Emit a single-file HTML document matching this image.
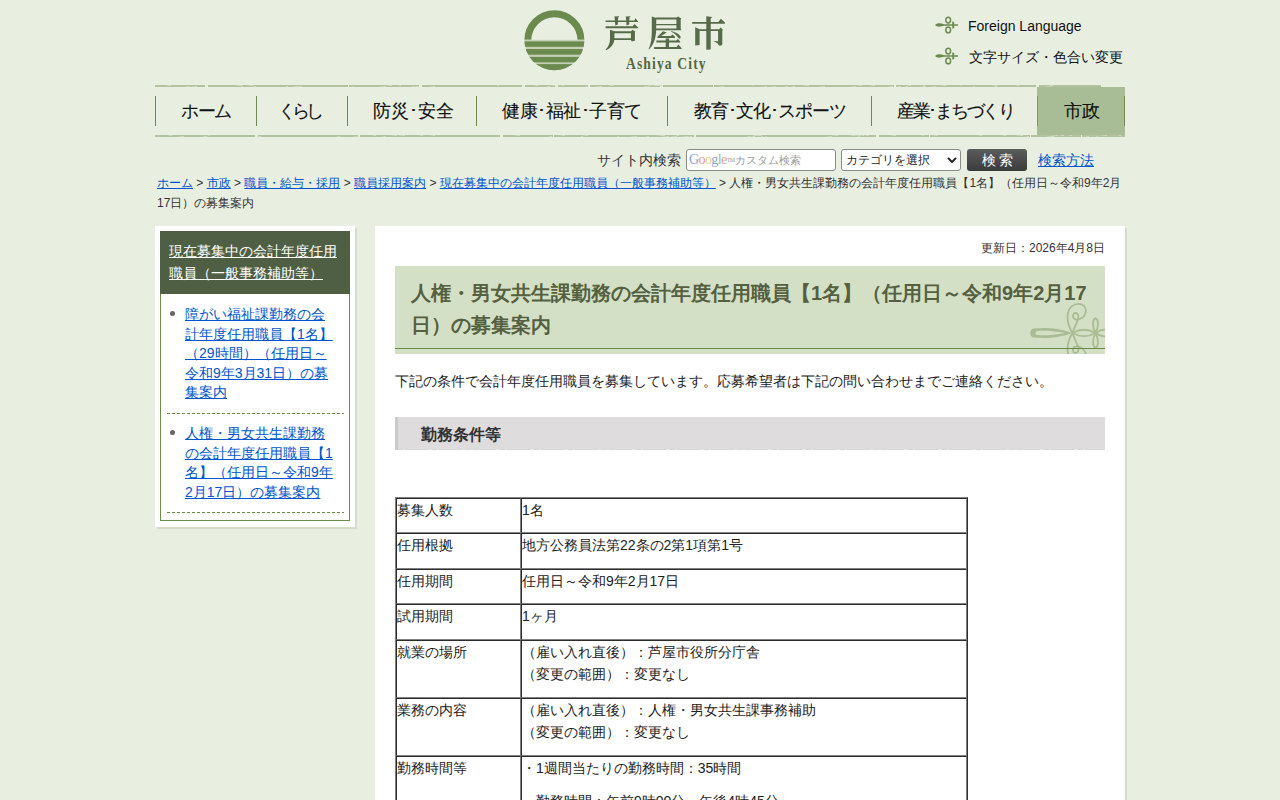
<!DOCTYPE html>
<html lang="ja"><head><meta charset="utf-8"><title>芦屋市</title>
<style>
html,body{margin:0;padding:0}
body{background:#e8efe1;font-family:"Liberation Sans",sans-serif;color:#222;width:1280px;height:800px;overflow:hidden;position:relative}
.abs{position:absolute}
a{color:#0055cc}
#hdr{position:absolute;left:0;top:0;width:1280px;height:140px}
.logo-t{position:absolute;left:606px;top:8px;font-size:34px;letter-spacing:9.2px;color:#566b4a;font-weight:bold;line-height:50px;white-space:nowrap}
.logo-e{position:absolute;left:626px;top:54px;font-family:"Liberation Serif",serif;font-weight:bold;font-size:17px;letter-spacing:1.4px;color:#52663f;line-height:20px;white-space:nowrap;transform:scaleX(0.8);transform-origin:0 0}
.hl{position:absolute;left:968px;font-size:14px;color:#111;line-height:20px;white-space:nowrap}
.nav-line{position:absolute;left:155px;width:970px;height:2px;background:repeating-linear-gradient(90deg,#b6c5a3 0 37px,#cdd8bf 37px 41px,#b6c5a3 41px 83px,#e8efe1 83px 86px)}
.sep{position:absolute;top:96px;width:1px;height:30px;background:#6f8a55}
.nv{position:absolute;top:99px;font-size:18px;line-height:24px;color:#111;white-space:nowrap;-webkit-text-stroke:0.12px #111}
#srch{position:absolute;top:148px;left:0;width:1280px;height:24px}
.crumb{position:absolute;left:157px;top:173px;width:970px;font-size:12px;line-height:20px;color:#333}
#side{position:absolute;left:155px;top:226px;width:200px;height:301px;background:#fff;box-shadow:2px 2px 0 #d5dccd}
#side .box{position:absolute;left:5px;top:5px;width:188px;height:288px;border:1px solid #6a8a4a}
#side .hd{position:absolute;left:-1px;top:-1px;width:190px;height:63px;background:#4f5f43}
#side .hd a{position:absolute;left:9px;top:9px;width:175px;color:#fff;font-size:14px;line-height:22px}
#side .it{position:absolute;left:24px;width:160px;font-size:14px;line-height:19.6px}
#side .bul{position:absolute;left:9px;width:5px;height:5px;border-radius:50%;background:#666}
#side .dash{position:absolute;left:6px;width:177px;height:1px;background:repeating-linear-gradient(90deg,#6a8a4a 0 3px,transparent 3px 5px)}
#main{position:absolute;left:375px;top:226px;width:750px;height:600px;background:#fff;box-shadow:2px 2px 0 #d5dccd}
.upd{position:absolute;right:20px;top:12px;font-size:12px;line-height:20px;color:#333}
.ttl{position:absolute;left:20px;top:40px;width:710px;height:88px;background:#d4e0c6;overflow:hidden}
.ttl .ln{position:absolute;left:0;top:82px;width:710px;height:1px;background:#6a8a4a}
.ttl h1{position:absolute;left:16px;top:11px;width:690px;margin:0;font-size:20px;line-height:32px;color:#556040;font-weight:bold}
.lead{position:absolute;left:20px;top:145px;font-size:14px;line-height:20px;color:#222;white-space:nowrap}
.h2{position:absolute;left:20px;top:191px;width:710px;height:33px;background:#dfdcdd}
.h2 .lb{position:absolute;left:0;top:0;width:3px;height:33px;background:#cbc9cb}
.h2 .bl{position:absolute;left:3px;top:32px;width:707px;height:1px;background:repeating-linear-gradient(90deg,#d6d4d5 0 5px,#e6e4e5 5px 7px,#d8d6d7 7px 30px,#e8e6e7 30px 34px)}
.h2 div.t{position:absolute;left:26px;top:7px;font-size:16px;line-height:22px;font-weight:bold;color:#333}
table.dt{position:absolute;left:20px;top:271px;border:1px outset gray;border-spacing:0;width:573px;font-size:14px;color:#222}
table.dt td{border:1px inset gray;padding:0;vertical-align:top;line-height:22.6px}
table.dt p{margin:0 0 10.8px}
</style></head><body>
<div id="hdr">
  <svg class="abs" style="left:520px;top:6px" width="70" height="70" viewBox="0 0 70 70">
    <defs><clipPath id="cc"><circle cx="34.4" cy="34.2" r="30"/></clipPath><clipPath id="ct"><rect x="0" y="0" width="70" height="33.8"/></clipPath></defs>
    <circle cx="34.4" cy="34.2" r="26.5" fill="none" stroke="#6b8a4e" stroke-width="7" clip-path="url(#ct)"/>
    <g clip-path="url(#cc)">
      <rect x="0" y="33.8" width="70" height="40" fill="#c3d0b4"/>
      <g fill="#6b8a4e">
      <rect x="0" y="35.4" width="70" height="5.4"/>
      <rect x="0" y="43.05" width="70" height="5.65"/>
      <rect x="0" y="50.9" width="70" height="5.4"/>
      <rect x="0" y="58.1" width="70" height="12"/>
      </g>
    </g>
  </svg>
  <svg class="abs" style="left:600px;top:12px" width="130" height="42" viewBox="600 12 130 42">
<g fill="#566b4a">
<!-- 芦 -->
<path d="M605.6 20.4H634.2L635.6 18.2L638 21.4V22H605.6Z"/>
<path d="M614.2 16.5L619.4 16.2L618.1 17.8L617.9 24.6L615.3 25.4L614.6 17.6Z"/>
<path d="M625.5 16.5L630.7 16.2L629.4 17.8L629.2 24.6L626.6 25.4L625.9 17.6Z"/>
<path d="M605.6 26.3H632.6L634.4 24L638.2 27.4V28.3H605.6Z"/>
<path d="M610 29.8L614.5 31.2L614.3 39.5C614 44 611 48 606.3 50.2L605.6 49.6C608.8 46.5 610 43 610 38.5Z"/>
<path d="M613.3 31.3H631L632.5 29.8L635.3 31.6L634.9 32.8V40.8L631.8 41.6L630.9 39.9H613.3V38.2H630.9V33.3H613.3Z"/>
<!-- 屋 -->
<path d="M651.8 16.6L656.3 18.1L656.1 31.5C655.6 40 653 45.5 649 49.4L648.6 49C651 44.5 651.8 38.5 651.8 31Z"/>
<path d="M655.8 17.6H676.4L678.2 16.4L681.2 18.4L680.7 19.6V29.3L676.4 29.8V25.3H655.8V24H676.4V19.6H655.8Z"/>
<path d="M655.8 28.6H676.8L678.6 27.2L681.2 29.6V30.3H655.8Z"/>
<path d="M663 31.2L666.8 32.4L661 35.9H670.8L672.5 34.6L675 36.8V37.9H657.8L657.2 37.1Z"/>
<path d="M671.3 30.9C675 32 679 33.6 680.4 36.2C681 37.6 680.2 39 678.8 38.6C677.5 36 674.5 33.5 671 31.5Z"/>
<path d="M656.4 40.5H676.2L677.9 39.1L680.2 41.6V42.5H656.4Z"/>
<path d="M665.7 38.2L669.6 38.6L669 39.5V47.2H665.7Z"/>
<path d="M654.1 46.9H676.4L678.5 44.6L681.6 48.2V48.9H654.1Z"/>
<!-- 市 -->
<path d="M706.3 16.2L712.2 17L710.7 18.6V49.6L706.3 49.8Z"/>
<path d="M692.1 22H718.4L720.8 18.8L724.9 22.6V23.8H692.1Z"/>
<path d="M695.2 27.2L699.6 29.3V45L695.2 45.6Z"/>
<path d="M699.2 29.3H719.1L720.6 27.4L722.9 29.8L722.3 31V44C722.3 45.4 721 45.8 719 45.6L717.4 43.2L713.4 40.9L718.1 41.2V30.9H699.2Z"/>
</g>
</svg>
  <div class="logo-e">Ashiya City</div>
  <svg class="abs" style="left:934px;top:15px" width="26" height="20" viewBox="0 0 26 20">
    <g fill="none" stroke="#6b8a4e" stroke-width="1.5">
      <ellipse cx="14.2" cy="5.1" rx="2.4" ry="2.9"/>
      <ellipse cx="14.2" cy="14.9" rx="2.4" ry="2.9"/>
    </g>
    <path d="M1 10 C3 7.6 7 8.2 10 9.2 L24 9.2 L24 10.8 L10 10.8 C7 11.8 3 12.4 1 10Z" fill="#6b8a4e"/>
    <path d="M18.3 6.2L20.2 7V13L18.3 13.8Z" fill="#6b8a4e"/>
  </svg>
  <svg class="abs" style="left:934px;top:46px" width="26" height="20" viewBox="0 0 26 20">
    <g fill="none" stroke="#6b8a4e" stroke-width="1.5">
      <ellipse cx="14.2" cy="5.1" rx="2.4" ry="2.9"/>
      <ellipse cx="14.2" cy="14.9" rx="2.4" ry="2.9"/>
    </g>
    <path d="M1 10 C3 7.6 7 8.2 10 9.2 L24 9.2 L24 10.8 L10 10.8 C7 11.8 3 12.4 1 10Z" fill="#6b8a4e"/>
    <path d="M18.3 6.2L20.2 7V13L18.3 13.8Z" fill="#6b8a4e"/>
  </svg>
  <div class="hl" style="top:16px">Foreign Language</div>
  <div class="hl" style="top:47px;left:969px">文字サイズ・色合い変更</div>

  <svg class="abs" style="left:155px;top:85px" width="970" height="2" viewBox="0 0 970 2"><path d="M0 0h50v2h-50zM53 0h140v2h-140zM194 0h70v2h-70zM267 0h100v2h-100zM370 0h30v2h-30zM403 0h30v2h-30zM435 0h70v2h-70zM508 0h50v2h-50zM559 0h180v2h-180zM741 0h140v2h-140zM884 0h62v2h-62z" fill="#b3c29f"/><path d="M731 1h7v1h-1zM713 0h7v1h-1zM79 0h7v1h-1zM391 1h4v1h-1zM893 0h5v1h-1zM84 0h3v1h-1zM597 0h2v1h-1zM230 0h7v1h-1zM130 1h3v1h-1zM763 1h8v1h-1zM750 1h3v1h-1zM805 0h2v1h-1zM377 0h6v1h-1zM223 1h8v1h-1zM256 1h3v1h-1zM775 1h6v1h-1zM197 1h2v1h-1zM493 0h3v1h-1zM430 1h2v1h-1zM492 1h2v1h-1zM860 0h4v1h-1zM496 0h6v1h-1zM784 0h7v1h-1zM392 1h2v1h-1zM563 1h6v1h-1zM635 1h5v1h-1zM838 1h4v1h-1zM767 0h3v1h-1zM455 0h4v1h-1zM662 1h8v1h-1zM10 0h6v1h-1zM243 0h3v1h-1zM395 0h6v1h-1zM86 1h2v1h-1zM488 1h4v1h-1zM91 0h7v1h-1zM36 1h4v1h-1zM701 0h6v1h-1zM97 1h4v1h-1zM406 0h3v1h-1zM274 1h6v1h-1zM836 0h7v1h-1zM629 1h4v1h-1zM136 1h7v1h-1zM646 0h8v1h-1zM28 1h7v1h-1zM751 0h5v1h-1zM439 1h8v1h-1zM890 1h6v1h-1zM741 1h5v1h-1zM258 1h6v1h-1zM34 1h8v1h-1zM608 1h4v1h-1zM817 1h3v1h-1zM139 1h8v1h-1zM454 0h2v1h-1zM499 0h8v1h-1zM341 0h3v1h-1zM614 1h7v1h-1zM693 1h8v1h-1z" fill="#cfdac3"/></svg>
  
  <div class="abs" style="left:1037px;top:87px;width:88px;height:48px;background:#a8bd95"></div>
  <svg class="abs" style="left:155px;top:135px" width="970" height="2" viewBox="0 0 970 2"><path d="M0 0h100v2h-100zM103 0h100v2h-100zM205 0h140v2h-140zM348 0h50v2h-50zM399 0h140v2h-140zM541 0h180v2h-180zM724 0h50v2h-50zM775 0h100v2h-100zM876 0h50v2h-50zM927 0h43v2h-43z" fill="#b3c29f"/><path d="M847 0h4v1h-1zM505 0h5v1h-1zM426 0h7v1h-1zM198 1h6v1h-1zM235 0h7v1h-1zM474 1h8v1h-1zM392 1h5v1h-1zM226 1h5v1h-1zM823 0h4v1h-1zM694 0h6v1h-1zM462 1h2v1h-1zM891 1h8v1h-1zM520 0h4v1h-1zM101 1h5v1h-1zM913 0h4v1h-1zM243 0h7v1h-1zM22 1h7v1h-1zM515 1h7v1h-1zM506 1h8v1h-1zM501 0h7v1h-1zM698 0h8v1h-1zM12 0h5v1h-1zM671 1h6v1h-1zM597 0h4v1h-1zM709 0h5v1h-1zM706 0h3v1h-1zM594 1h6v1h-1zM703 1h2v1h-1zM862 0h3v1h-1zM777 0h6v1h-1zM591 1h4v1h-1zM48 1h2v1h-1zM890 1h8v1h-1zM895 0h8v1h-1zM599 0h8v1h-1zM425 1h3v1h-1zM735 0h6v1h-1zM610 1h2v1h-1zM532 1h5v1h-1zM217 0h4v1h-1zM263 0h5v1h-1zM963 0h3v1h-1zM860 0h8v1h-1zM490 1h4v1h-1zM52 0h3v1h-1zM904 0h5v1h-1zM767 0h2v1h-1zM48 1h4v1h-1zM358 0h7v1h-1zM870 1h4v1h-1zM181 1h4v1h-1zM275 0h5v1h-1zM525 1h8v1h-1zM606 1h2v1h-1zM404 0h6v1h-1zM941 1h2v1h-1zM676 0h7v1h-1zM197 1h7v1h-1zM945 0h7v1h-1zM930 1h4v1h-1z" fill="#cfdac3"/></svg>
  <div class="sep" style="left:155px"></div>
  <div class="sep" style="left:256px"></div>
  <div class="sep" style="left:347px"></div>
  <div class="sep" style="left:476px"></div>
  <div class="sep" style="left:667px"></div>
  <div class="sep" style="left:871px"></div>
  <div class="sep" style="left:1124px"></div>
  <div class="sep" style="left:1037px;background:#7d9866"></div>
  <div class="nv" style="left:181px;letter-spacing:-1.5px">ホーム</div>
  <div class="nv" style="left:278px;letter-spacing:-4px">くらし</div>
  <div class="nv" style="left:373px">防災･安全</div>
  <div class="nv" style="left:502px;letter-spacing:-0.45px">健康･福祉･子育て</div>
  <div class="nv" style="left:694px;letter-spacing:-1px">教育･文化･スポーツ</div>
  <div class="nv" style="left:897px;letter-spacing:-2.3px">産業･まちづくり</div>
  <div class="nv" style="left:1064px">市政</div>
</div>

<div id="srch">
  <div class="abs" style="left:597px;top:2px;font-size:14px;line-height:20px;color:#333">サイト内検索</div>
  <div class="abs" style="left:686px;top:1px;width:148px;height:20px;border:1px solid #8a8a8a;border-radius:3px;background:#fff">
    <div class="abs" style="left:2px;top:2px;font-family:'Liberation Serif',serif;font-size:14px;line-height:16px;letter-spacing:-0.6px;white-space:nowrap"><span style="color:#8aa2d8">G</span><span style="color:#e09a9a">o</span><span style="color:#e6cf7a">o</span><span style="color:#8aa2d8">g</span><span style="color:#92c48f">l</span><span style="color:#e09a9a">e</span><span style="font-size:6px;color:#999;vertical-align:top">TM</span></div>
    <div class="abs" style="left:48px;top:3px;font-size:11px;line-height:14px;color:#999;white-space:nowrap">カスタム検索</div>
  </div>
  <div class="abs" style="left:841px;top:1px;width:118px;height:20px;border:1px solid #8a8a8a;border-radius:3px;background:#fff">
    <div class="abs" style="left:4px;top:3px;font-size:12px;line-height:14px;color:#222;white-space:nowrap">カテゴリを選択</div>
    <svg class="abs" style="left:105px;top:7px" width="10" height="7" viewBox="0 0 10 7"><path d="M1 1 L5 5 L9 1" fill="none" stroke="#222" stroke-width="1.8"/></svg>
  </div>
  <div class="abs" style="left:967px;top:1px;width:60px;height:22px;border-radius:3px;background:linear-gradient(#5c5c5c,#3a3a3a)">
    <div class="abs" style="left:15px;top:3px;font-size:14px;line-height:16px;color:#fff;letter-spacing:3px;white-space:nowrap">検索</div>
  </div>
  <a class="abs" style="left:1038px;top:2px;font-size:14px;line-height:20px" href="#">検索方法</a>
</div>

<div class="crumb"><a href="#">ホーム</a> &gt; <a href="#">市政</a> &gt; <a href="#">職員・給与・採用</a> &gt; <a href="#">職員採用案内</a> &gt; <a href="#">現在募集中の会計年度任用職員（一般事務補助等）</a> &gt; 人権・男女共生課勤務の会計年度任用職員【1名】（任用日～令和9年2月<br>17日）の募集案内</div>

<div id="side">
  <div class="box">
    <div class="hd"><a href="#">現在募集中の会計年度任用<br>職員（一般事務補助等）</a></div>
    <div class="bul" style="top:79px"></div>
    <div class="it" style="top:73px"><a href="#">障がい福祉課勤務の会<br>計年度任用職員【1名】<br>（29時間）（任用日～<br>令和9年3月31日）の募<br>集案内</a></div>
    <div class="dash" style="top:181px"></div>
    <div class="bul" style="top:198px"></div>
    <div class="it" style="top:192px"><a href="#">人権・男女共生課勤務<br>の会計年度任用職員【1<br>名】（任用日～令和9年<br>2月17日）の募集案内</a></div>
    <div class="dash" style="top:280px"></div>
  </div>
</div>

<div id="main">
  <div class="upd">更新日：2026年4月8日</div>
  <div class="ttl">
    <svg class="abs" style="left:0;top:0" width="710" height="88" viewBox="0 0 710 88">
      <g fill="none" stroke="#a9bd95" stroke-width="1.8">
        <path d="M677.5,67 C 671,57 670,42 680,38.5 C 688,36 692,42 690.5,47 C 689,52 684,54 681,53.5 C 677,53 677,47 680.5,47 C 684,47 684,52 682,56 C 680,60 679,63 677.5,67"/>
        <path d="M677.5,67 C 671,77 670,92 680,95.5 C 688,98 692,92 690.5,87 C 689,82 684,80 681,80.5 C 677,81 677,87 680.5,87 C 684,87 684,82 682,78 C 680,74 679,71 677.5,67"/>
        <path d="M677.5,67 C 685,62.8 693,62.8 700.5,67 C 693,71.2 685,71.2 677.5,67"/>
        <path d="M700.5,67 C 697,61 697.5,53 700.5,52.5 C 703.5,53 704,61 700.5,67"/>
        <path d="M700.5,67 C 697,73 697.5,81 700.5,81.5 C 703.5,81 704,73 700.5,67"/>
        <path d="M700.5,67 C 705,63.5 710,63 716,64"/>
        <path d="M700.5,67 C 705,70.5 710,71 716,70"/>
      </g>
      <path fill="#a9bd95" fill-rule="evenodd" d="M677.5,67 C 662,61.2 648,61.6 639,62.4 C 634,63 634,71 639,71.6 C 648,72.4 662,72.8 677.5,67 Z M670,67 C 658,64.6 648,64.4 643,64.9 C 639.6,65.3 639.6,68.7 643,69.1 C 648,69.6 658,69.4 670,67 Z"/>
    </svg>
    <div class="ln"></div>
    <h1>人権・男女共生課勤務の会計年度任用職員【1名】（任用日～令和9年2月17日）の募集案内</h1>
  </div>
  <div class="lead">下記の条件で会計年度任用職員を募集しています。応募希望者は下記の問い合わせまでご連絡ください。</div>
  <div class="h2"><div class="lb"></div><div class="bl"></div><div class="t">勤務条件等</div></div>
  <table class="dt">
    <tr><td style="width:123px"><p>募集人数</p></td><td><p>1名</p></td></tr>
    <tr><td><p>任用根拠</p></td><td><p>地方公務員法第22条の2第1項第1号</p></td></tr>
    <tr><td><p>任用期間</p></td><td><p>任用日～令和9年2月17日</p></td></tr>
    <tr><td><p>試用期間</p></td><td><p>1ヶ月</p></td></tr>
    <tr><td><p>就業の場所</p></td><td><p>（雇い入れ直後）：芦屋市役所分庁舎<br>（変更の範囲）：変更なし</p></td></tr>
    <tr><td><p>業務の内容</p></td><td><p>（雇い入れ直後）：人権・男女共生課事務補助<br>（変更の範囲）：変更なし</p></td></tr>
    <tr><td><p>勤務時間等</p></td><td><p>・1週間当たりの勤務時間：35時間</p><p>・勤務時間：午前9時00分～午後4時45分</p></td></tr>
  </table>
</div>
</body></html>
